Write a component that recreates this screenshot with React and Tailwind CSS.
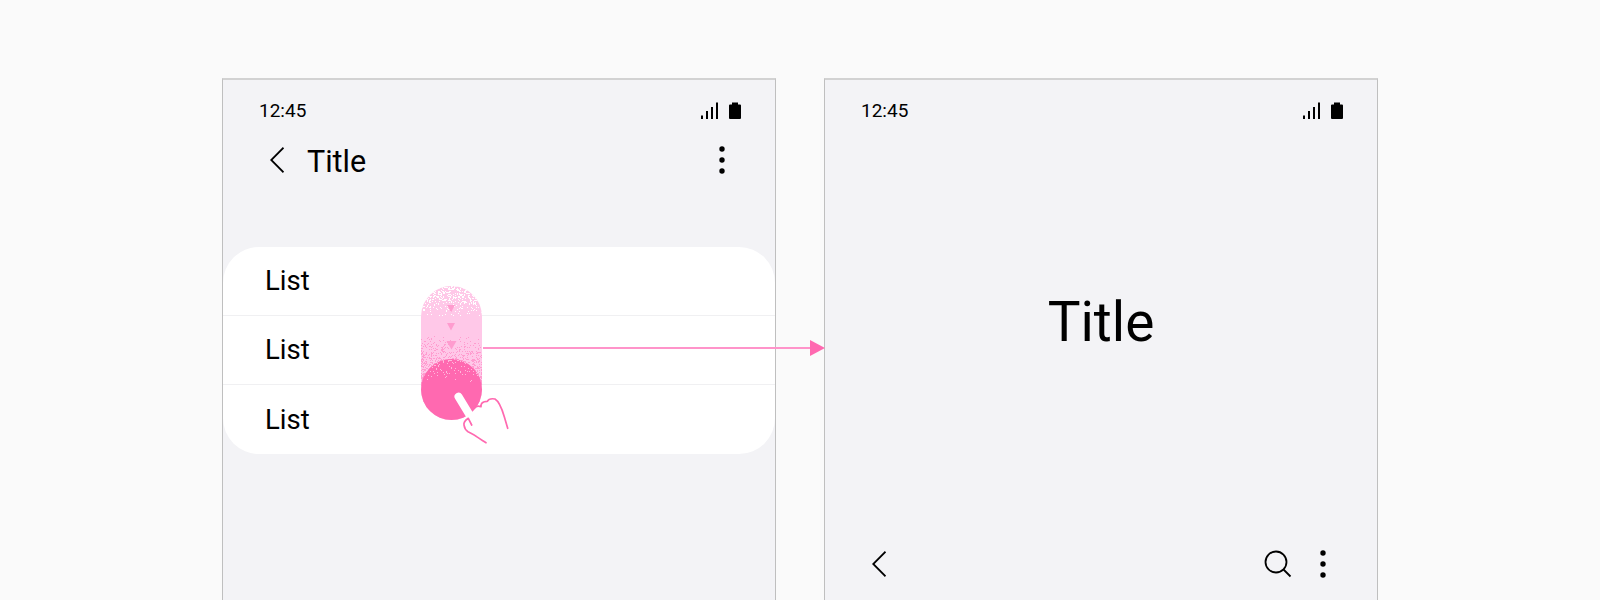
const StatusBar = () => (
  <div className="flex items-center justify-between h-[26px] pl-[36px] pr-[34px] mt-[18px]">
    <span className="text-[19px] leading-[26px] text-black">12:45</span>
    <svg width="40" height="18" viewBox="0 0 40 18" fill="#000">
      <rect x="0" y="13.500" width="2" height="3.500" />
      <rect x="5" y="9" width="2" height="8" />
      <rect x="10" y="5" width="2" height="12" />
      <rect x="15" y="0.500" width="2" height="16.500" />
      <path d="M28 3.500a1 1 0 0 1 1-1h2V.5h6v2h2a1 1 0 0 1 1 1V16a1 1 0 0 1-1 1H29a1 1 0 0 1-1-1z" />
    </svg>
  </div>
);

const BackIcon = () => (
  <svg width="14" height="26" viewBox="0 0 14 26" fill="none" stroke="#000" strokeWidth="1.800">
    <path d="M13.500.7 1.200 13l12.300 12.300" />
  </svg>
);

const MoreIcon = () => (
  <svg width="8" height="30" viewBox="0 0 8 30" fill="#000">
    <circle cx="4" cy="4" r="2.700" />
    <circle cx="4" cy="15" r="2.700" />
    <circle cx="4" cy="26" r="2.700" />
  </svg>
);

const ListRow = ({ last }) => (
  <div className={`h-[69px] flex items-center pl-[42px] text-[27.5px] text-black ${last ? "" : "border-b border-[#f0f0f2]"}`}>
    List
  </div>
);

// little pseudo random specks for the dithered fade of the gesture
const specks = (() => {
  let seed = 7;
  const rnd = () => {
    seed = (seed * 16807) % 2147483647;
    return seed / 2147483647;
  };
  const pill = [];
  const circle = [];
  for (let y = 0; y < 134; y += 1) {
    for (let x = 0; x < 61; x += 1) {
      const r = rnd();
      if (y < 30 && r < 0.45 - y * 0.014) pill.push({ x, y, c: "#ffffff" });
      if (y >= 49 && y < 100 && r < (y - 49) * 0.014) pill.push({ x, y, c: "#ff9ccf" });
      if (y >= 73 && y < 96 && r > 1 - (96 - y) * 0.007) circle.push({ x, y, c: "#ffb8dc" });
    }
  }
  return { pill, circle };
})();

const Dots = ({ list }) =>
  list.map((s, i) => <rect key={i} x={s.x} y={s.y} width="1" height="1" fill={s.c} />);

const Gesture = () => (
  <svg className="absolute left-[198px] top-[39px]" width="102" height="170" viewBox="0 0 102 170" fill="none">
    <defs>
      <clipPath id="pill">
        <rect x="0" y="0" width="61" height="134" rx="30.500" />
      </clipPath>
      <clipPath id="knob">
        <circle cx="30.500" cy="103.500" r="30.500" />
      </clipPath>
    </defs>
    <g clipPath="url(#pill)">
      <rect width="61" height="134" fill="#ffc8e8" />
      <Dots list={specks.pill} />
    </g>
    <path d="M26 19h8l-4 7.500z" fill="#ff9ccf" />
    <path d="M26 37h8l-4 7.500z" fill="#ff9ccf" />
    <path d="M25.500 55h10l-5 8.500z" fill="#ff9ccf" />
    <circle cx="30.500" cy="103.500" r="30.500" fill="#ff69b0" />
    <g clipPath="url(#knob)">
      <Dots list={specks.circle} />
    </g>
    <path d="M37.500 110.700 50.700 132.300" stroke="#fff" strokeWidth="8" strokeLinecap="round" />
    <path
      d="M47.300 132.300c-3 2-4.800 4.500-4.300 6.900.5 3 1.500 5 4 6.500 3 1.600 6 2.600 9 5.200 3 2.200 6 3.800 9 5.800M47.300 132.300 50.700 139M53 122.300Q55.500 119 60 120.700 59.500 115.500 66.300 115.300 68 112 74 113 79 116 83.300 130.700L86.700 142.300"
      stroke="#ff69b0"
      strokeWidth="1.700"
      strokeLinecap="round"
      strokeLinejoin="round"
    />
  </svg>
);

const App = () => {
  return (
    <div className="h-[600px] overflow-hidden bg-[#fafafa] flex pl-[222px] pt-[78px] gap-[48px] font-['Roboto',sans-serif]">
      {/* Left phone */}
      <div className="w-[554px] h-[600px] shrink-0 bg-[#f3f3f6] border border-t-2 border-b-0 border-[#bfbfbf] border-t-[#d2d2d2]">
        <StatusBar />
        <div className="flex items-center justify-between h-[44px] mt-[14px] pl-[47px] pr-[49px]">
          <div className="flex items-center gap-[23px]">
            <BackIcon />
            <span className="pt-[4px] text-[30.5px] leading-[44px] text-black">Title</span>
          </div>
          <MoreIcon />
        </div>
        <div className="relative mt-[65px] bg-white rounded-[36px]">
          <ListRow />
          <ListRow />
          <ListRow last />
          <Gesture />
          {/* Arrow to the next screen */}
          <div className="absolute left-[260px] top-[100px] w-[331px] h-[2px] bg-[#ff94ca]" />
          <svg className="absolute left-[587px] top-[93px]" width="15" height="16" viewBox="0 0 15 16" fill="#ff69b0">
            <path d="M0 0 15 8 0 16z" />
          </svg>
        </div>
      </div>

      {/* Right phone */}
      <div className="w-[554px] h-[600px] shrink-0 bg-[#f3f3f6] border border-t-2 border-b-0 border-[#bfbfbf] border-t-[#d2d2d2]">
        <StatusBar />
        <div className="flex justify-center pt-[166px] text-[55px] leading-[64px] text-black">Title</div>
        <div className="flex items-center justify-between mt-[195px] pl-[47px] pr-[50px]">
          <BackIcon />
          <div className="flex items-center gap-[27px]">
            <svg width="28" height="28" viewBox="0 0 28 28" fill="none" stroke="#000" strokeWidth="1.800">
              <circle cx="12" cy="12" r="10.500" />
              <path d="m19.500 19.500 7 7" />
            </svg>
            <MoreIcon />
          </div>
        </div>
      </div>
    </div>
  );
};

export default App;
